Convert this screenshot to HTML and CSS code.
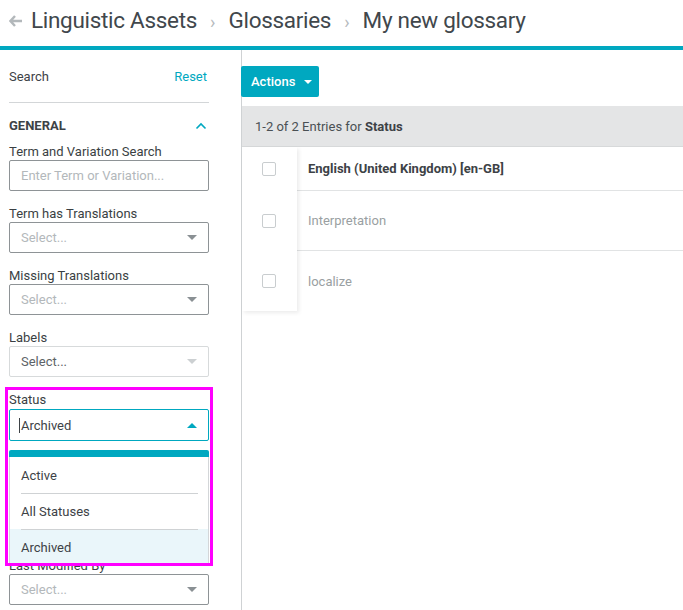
FILE: index.html
```html
<!DOCTYPE html>
<html>
<head>
<meta charset="utf-8">
<link rel="stylesheet" href="styles.css">
</head>
<body>
<header class="topbar">
  <svg class="back" width="14" height="12" viewBox="0 0 14 12"><path d="M6 1 L1.5 6 L6 11 M1.5 6 H13" fill="none" stroke="#b3b8bb" stroke-width="2.4"/></svg>
  <span class="crumb">Linguistic Assets</span>
  <span class="sep">›</span>
  <span class="crumb">Glossaries</span>
  <span class="sep">›</span>
  <span class="crumb">My new glossary</span>
</header>
<div class="layout">
  <aside class="sidebar">
    <div class="search-row"><span>Search</span><span class="reset">Reset</span></div>
    <div class="section-head"><span>GENERAL</span>
      <svg width="12" height="8" viewBox="0 0 12 8"><path d="M1.5 6.5 L6 2 L10.5 6.5" fill="none" stroke="#00a8c0" stroke-width="1.6"/></svg>
    </div>
    <div class="field">
      <div class="label">Term and Variation Search</div>
      <div class="box"><span class="ph">Enter Term or Variation...</span></div>
    </div>
    <div class="field">
      <div class="label">Term has Translations</div>
      <div class="box"><span class="ph">Select...</span><span class="caret"></span></div>
    </div>
    <div class="field">
      <div class="label">Missing Translations</div>
      <div class="box"><span class="ph">Select...</span><span class="caret"></span></div>
    </div>
    <div class="field">
      <div class="label">Labels</div>
      <div class="box disabled"><span class="val">Select...</span><span class="caret light"></span></div>
    </div>
    <div class="field status">
      <div class="label">Status</div>
      <div class="box focus"><span class="cursor"></span><span class="val">Archived</span><span class="caret up"></span></div>
      <div class="menu">
        <div class="menu-top"></div>
        <div class="opt">Active</div>
        <div class="opt">All Statuses</div>
        <div class="opt sel">Archived</div>
      </div>
      <div class="highlight"></div>
    </div>
    <div class="field">
      <div class="label">Last Modified By</div>
      <div class="box"><span class="ph">Select...</span><span class="caret"></span></div>
    </div>
  </aside>
  <main class="main">
    <button class="actions">Actions <span class="caret white"></span></button>
    <div class="table">
      <div class="thead">1-2 of 2 Entries for <b>Status</b></div>
      <div class="tbody">
        <div class="checkcol">
          <div class="cell r1"><span class="cb"></span></div>
          <div class="cell r2"><span class="cb"></span></div>
          <div class="cell r3"><span class="cb"></span></div>
        </div>
        <div class="textcol">
          <div class="row r1 strong">English (United Kingdom) [en-GB]</div>
          <div class="row r2">Interpretation</div>
          <div class="row r3">localize</div>
        </div>
      </div>
    </div>
  </main>
</div>
</body>
</html>
```

FILE: styles.css
```css
* { box-sizing: border-box; }
html, body { margin: 0; padding: 0; background: #fff; }
body {
  font-family: Roboto, "Liberation Sans", sans-serif;
  color: #3d4246;
  width: 683px;
  height: 610px;
  overflow: hidden;
}
.topbar {
  height: 50px;
  border-bottom: 4px solid #00a8c0;
  display: flex;
  align-items: center;
  padding-left: 9px;
  padding-bottom: 6px;
}
.back { margin-right: 8px; margin-top: 1px; }
.crumb { font-size: 22.5px; color: #41474c; letter-spacing: -0.3px; }
.sep { font-size: 18px; color: #b6babd; margin: 2px 13px 0 13px; }
.layout { display: flex; height: 560px; }
.sidebar { width: 241px; padding-left: 9px; padding-right: 32px; flex: none; }
.search-row {
  height: 53px;
  border-bottom: 1px solid #d3d6d8;
  display: flex;
  justify-content: space-between;
  align-items: center;
  font-size: 13px;
  padding-right: 2px;
  padding-top: 1px;
}
.reset { color: #00a8c0; }
.section-head {
  height: 40px;
  padding-top: 5px;
  display: flex;
  justify-content: space-between;
  align-items: center;
  font-size: 13px;
  font-weight: 700;
  color: #3d4246;
  padding-right: 2px;
}
.field { margin-bottom: 14px; position: relative; }
.label { font-size: 13px; line-height: 17px; height: 17px; color: #3a3f43; }
.box {
  height: 31px;
  border: 1px solid #8e9396;
  border-radius: 2px;
  display: flex;
  align-items: center;
  padding: 0 11px;
  font-size: 13px;
  position: relative;
}
.ph { color: #b3b8bb; }
.val { color: #484e52; }
.box.disabled { border-color: #d7dadb; }
.box.disabled .val { color: #5d6367; }
.box.focus { border-color: #00a8c0; padding-left: 9px; height: 32px; margin-top: 1px; }
.box.focus .val { color: #3d4246; }
.cursor { width: 1px; height: 15px; background: #3d4246; margin-right: 1px; }
.caret {
  margin-left: auto;
  width: 0; height: 0;
  border-left: 5px solid transparent;
  border-right: 5px solid transparent;
  border-top: 5px solid #8a9094;
  margin-right: 0;
}
.caret.light { border-top-color: #ccd0d2; }
.caret.up { border-top: 0; border-bottom: 5px solid #00a8c0; }
.status .menu {
  margin-top: 9px;
  margin-bottom: -22px;
  position: relative;
  z-index: 1;
  background: #fff;
}
.menu-top { height: 7px; background: #00a8c0; border-radius: 2px 2px 0 0; }
.opt {
  height: 36px;
  display: flex;
  align-items: center;
  padding-left: 11px;
  font-size: 13px;
  color: #3d4246;
  border-left: 1px solid #d3d6d8;
  border-right: 1px solid #d3d6d8;
  position: relative;
}
.opt + .opt::before {
  content: "";
  position: absolute;
  left: 11px; right: 10px; top: 0;
  border-top: 1px solid #cfd2d4;
}
.opt.sel { background: #eaf6fa; height: 36px; }
.highlight {
  position: absolute;
  left: -4px; right: -4px; top: -4px;
  height: 179px;
  border: 3px solid #ff00ff;
  z-index: 2;
  pointer-events: none;
}
.main { flex: 1; border-left: 1px solid #cfd2d4; }
.actions {
  margin-top: 16px;
  margin-left: -1px;
  width: 78px;
  height: 31px;
  background: #00a8c0;
  color: #fff;
  border: 0;
  border-radius: 2px;
  font-family: inherit;
  font-size: 13px;
  font-weight: 500;
  display: flex;
  align-items: center;
  padding: 0 0 0 10px;
}
.caret.white { border-top-color: #fff; margin-left: 9px; border-left-width: 4px; border-right-width: 4px; border-top-width: 4px; }
.table { margin-top: 9px; }
.thead {
  height: 41px;
  background: #e4e5e6;
  display: flex;
  align-items: center;
  padding-left: 13px;
  font-size: 13px;
  color: #4a5054;
  border-bottom: 1px solid #d7d9da;
  white-space: pre;
}
.thead b { font-weight: 700; color: #3d4246; }
.tbody { display: flex; }
.checkcol {
  width: 55px;
  flex: none;
  background: #fff;
  box-shadow: 2px 2px 4px rgba(0,0,0,0.08);
  position: relative;
  z-index: 1;
}
.cell { display: flex; justify-content: center; align-items: center; }
.r1 { height: 44px; }
.r2 { height: 60px; }
.r3 { height: 60px; }
.cb { width: 14px; height: 14px; border: 1px solid #c9cdcf; border-radius: 2px; background: #fff; margin-left: -2px; }
.textcol { flex: 1; margin-left: -55px; }
.row {
  display: flex;
  align-items: center;
  padding-left: 66px;
  font-size: 13px;
  color: #9a9fa2;
  border-bottom: 1px solid #e1e3e4;
}
.row.r3 { border-bottom: 0; }
.row.strong { color: #3d4246; font-weight: 700; }
```
